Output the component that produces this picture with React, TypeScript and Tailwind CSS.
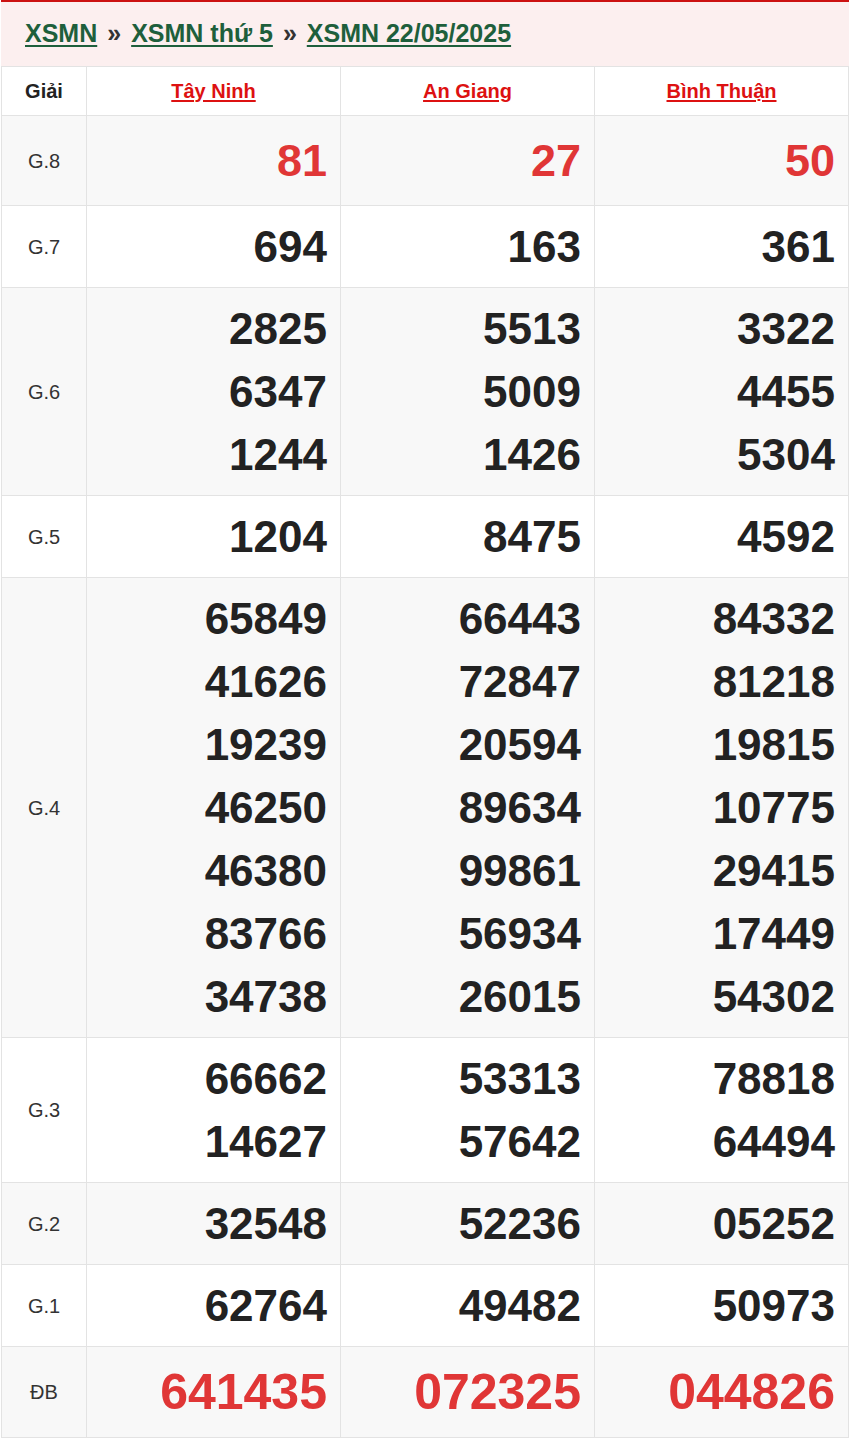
import React from "react";

type Row = { label: string; vals: string[][]; kind?: "g8" | "db" };

const rows: Row[] = [
  { label: "G.8", vals: [["81"], ["27"], ["50"]], kind: "g8" },
  { label: "G.7", vals: [["694"], ["163"], ["361"]] },
  {
    label: "G.6",
    vals: [
      ["2825", "6347", "1244"],
      ["5513", "5009", "1426"],
      ["3322", "4455", "5304"],
    ],
  },
  { label: "G.5", vals: [["1204"], ["8475"], ["4592"]] },
  {
    label: "G.4",
    vals: [
      ["65849", "41626", "19239", "46250", "46380", "83766", "34738"],
      ["66443", "72847", "20594", "89634", "99861", "56934", "26015"],
      ["84332", "81218", "19815", "10775", "29415", "17449", "54302"],
    ],
  },
  {
    label: "G.3",
    vals: [
      ["66662", "14627"],
      ["53313", "57642"],
      ["78818", "64494"],
    ],
  },
  { label: "G.2", vals: [["32548"], ["52236"], ["05252"]] },
  { label: "G.1", vals: [["62764"], ["49482"], ["50973"]] },
  { label: "ĐB", vals: [["641435"], ["072325"], ["044826"]], kind: "db" },
];

const provinces = ["Tây Ninh", "An Giang", "Bình Thuận"];

export default function App() {
  return (
    <div
      className="w-full bg-white"
      style={{ fontFamily: '"Liberation Sans", Arial, sans-serif' }}
    >
      <div className="w-[848px] mx-auto">
        <div className="border-t-2 border-[#cc1111] bg-[#fcefef] h-[66px] flex items-center pl-[24px] text-[25px] font-bold text-[#333]">
          <a className="text-[#1e5f3c] underline underline-offset-[3px] decoration-[2px]" href="#">
            XSMN
          </a>
          <span className="mx-[10px] text-[#333]">»</span>
          <a className="text-[#1e5f3c] underline underline-offset-[3px] decoration-[2px]" href="#">
            XSMN thứ 5
          </a>
          <span className="mx-[10px] text-[#333]">»</span>
          <a className="text-[#1e5f3c] underline underline-offset-[3px] decoration-[2px]" href="#">
            XSMN 22/05/2025
          </a>
        </div>
        <div className="border-x border-b border-[#e3e3e3]">
          <div className="grid grid-cols-[84px_254px_254px_254px] border-t border-[#e3e3e3] bg-white">
            <div className="h-[48px] flex items-center justify-center text-[20px] font-bold text-[#222]">
              Giải
            </div>
            {provinces.map((p) => (
              <div
                key={p}
                className="h-[48px] flex items-center justify-center border-l border-[#e3e3e3]"
              >
                <a
                  href="#"
                  className="text-[20px] font-bold text-[#dd1111] underline underline-offset-[2px]"
                >
                  {p}
                </a>
              </div>
            ))}
          </div>
          {rows.map((r, i) => {
            const bg = i % 2 === 0 ? "bg-[#f8f8f8]" : "bg-white";
            const numCls =
              r.kind === "db"
                ? "text-[50px] leading-[72px] text-[#e03636]"
                : r.kind === "g8"
                ? "text-[45px] leading-[71px] text-[#e03636]"
                : "text-[44px] leading-[63px] text-[#222]";
            return (
              <div
                key={r.label}
                className={`grid grid-cols-[84px_254px_254px_254px] border-t border-[#e3e3e3] ${bg}`}
              >
                <div className="flex items-center justify-center text-[20px] text-[#333]">
                  {r.label}
                </div>
                {r.vals.map((col, ci) => (
                  <div
                    key={ci}
                    className="border-l border-[#e3e3e3] py-[9px] pr-[13px] flex flex-col items-end"
                  >
                    {col.map((n, ni) => (
                      <div key={ni} className={`font-bold ${numCls}`}>
                        {n}
                      </div>
                    ))}
                  </div>
                ))}
              </div>
            );
          })}
        </div>
      </div>
    </div>
  );
}
